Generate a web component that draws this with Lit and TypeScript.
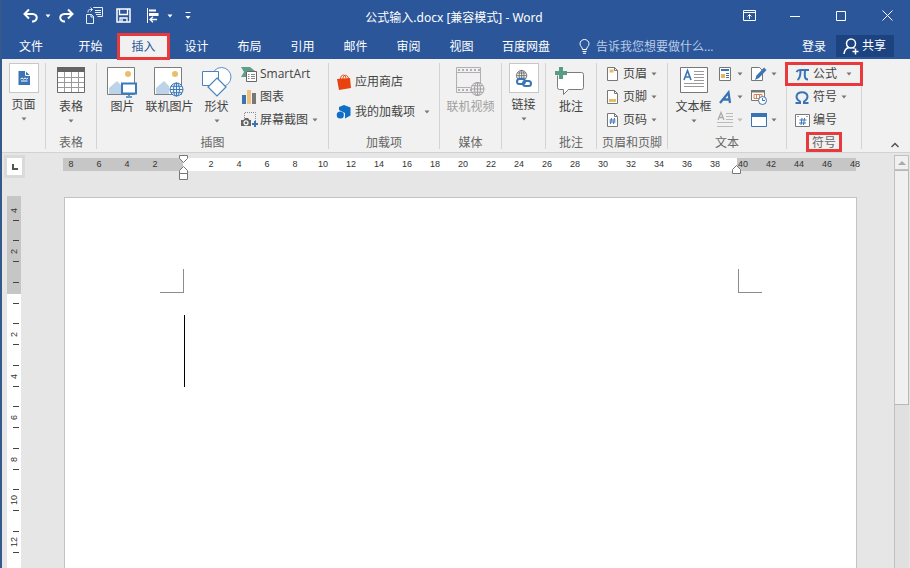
import { LitElement, html, css, svg } from "lit";
import { customElement } from "lit/decorators.js";

const ic = (w: number, h: number, body: unknown) =>
  html`<svg width=${w} height=${h} viewBox="0 0 ${w} ${h}" fill="none" aria-hidden="true">${body}</svg>`;

const caret = html`<svg class="caret" width="6" height="4" viewBox="0 0 6 4" aria-hidden="true"><path d="M.5.5h5L3 3.500z" fill="currentColor" /></svg>`;

const globe = svg`<circle cx="7" cy="7" r="6.5" fill="#f1f1f1" stroke="currentColor"/><ellipse cx="7" cy="7" rx="3" ry="6.5" stroke="currentColor"/><path d="M7 .5v13M.5 7h13M1.5 3.8h11M1.5 10.2h11" stroke="currentColor"/>`;

const photo = svg`<path d="M.5.5h27v27H.5z" fill="#fff" stroke="#7d7d7d"/><circle cx="21" cy="7" r="3" fill="#e8c067"/><path d="M2 27v-6l8-7 5 5v8z" fill="#bdd3ea"/>`;

const icons = {
  undo: ic(16, 14, svg`<path d="M2 5h7.5c6 0 5.500 8-.5 7.500" stroke="#fff" stroke-width="2"/><path d="M6 .5 1.500 5 6 9.500" stroke="#fff" stroke-width="2"/>`),
  redo: ic(16, 14, svg`<path d="M14 5H6.500C.5 5 1 13 7 12.500" stroke="#fff" stroke-width="2"/><path d="m10 .5 4.500 4.500L10 9.500" stroke="#fff" stroke-width="2"/>`),
  paste: ic(17, 17, svg`<path d="M7.500 1V.5h9v9h-5M9 3.500h6M9 5.500h6M10 7.500h5M.5 7.500h5l2 2v7h-7zM5 7.500v2.500h3M2 5.500c0-3 1-3 4-3M4.500.5l2 2-2 2" stroke="#e8eef8"/>`),
  save: ic(15, 15, svg`<path d="M1 1h13v13H1z" stroke="#fff" stroke-width="1.500"/><path d="M3.500 1v5.500h8V1M4 14v-4h7v4M6 11v3" stroke="#fff" stroke-width="1.300"/>`),
  align: ic(14, 15, svg`<path d="M1.500 0v15" stroke="#fff"/><path d="M3 1.500h7v2H3zM3 5h9.500v3H3z" fill="#fff"/><path d="M11 11.500H4M7 8.800l-3 2.700 3 2.700" stroke="#fff" stroke-width="1.300"/>`),
  more: ic(6, 8, svg`<path d="M.5.500h5" stroke="#fff"/><path d="M.5 4h5L3 7z" fill="#fff"/>`),
  ribbonOpts: ic(13, 11, svg`<path d="M.5.5h12v10H.5zM.5 2.500h12M6.500 9V4.500M4.500 6.500l2-2 2 2" stroke="#fff"/>`),
  min: ic(10, 10, svg`<path d="M0 5.500h10" stroke="#fff"/>`),
  max: ic(10, 10, svg`<path d="M.5.5h9v9h-9z" stroke="#fff"/>`),
  close: ic(11, 11, svg`<path d="m.5.5 10 10M10.500.5l-10 10" stroke="#fff"/>`),
  bulb: ic(11, 15, svg`<path d="M3.500 10.500C3.500 8 1 7.500 1 4.800a4.500 4.300 0 0 1 9 0c0 2.700-2.500 3.200-2.500 5.700zM3.500 12.500h4M4 14.300h3" stroke="#fff"/>`),
  share: ic(16, 17, svg`<circle cx="8" cy="5.500" r="4.500" stroke="#fff" stroke-width="1.500"/><path d="M1 16c.5-4 2.500-6 5-6.500M10 9.500l1.500.8M12.500 10.500v6M9.500 13.500h6" stroke="#fff" stroke-width="1.500"/>`),
  page: ic(12, 14, svg`<path d="M.5 0h7L12 4.500V14H.5z" fill="#3b74b4"/><path d="M7.500 0v4.500H12" stroke="#fff"/><path d="m2.500 8 1.500-1 1.500 1L7 7l1.500 1L10 7M3 10h6.500" stroke="#fff"/>`),
  table: ic(28, 26, svg`<path d="M.5.5h27v25H.5z" fill="#fff"/><path d="M7.500 5v20M14.500 5v20M21.500 5v20M1 10.500h26M1 15.500h26M1 20.500h26" stroke="#9a9a9a"/><path d="M.5.5h27v25H.5z" stroke="#6a6a6a"/><path d="M0 0h28v5H0z" fill="#646464"/>`),
  picture: ic(32, 32, svg`${photo}<path d="M15 16.500h14v10H15z" fill="#fff" stroke="#3b79bd" stroke-width="2"/><path d="M19 30h6M22 27v2" stroke="#3b79bd" stroke-width="1.500"/>`),
  webPicture: ic(32, 32, svg`${photo}<g transform="translate(15.500 15.500)" color="#3b79bd">${globe}</g>`),
  shapes: ic(30, 30, svg`<circle cx="19.500" cy="10" r="9.500" fill="#fff" stroke="#5b90c8"/><path d="M.5 4.500h16v14H.5z" fill="#fff" stroke="#4a82be"/><path d="m15 11 9 9-9 9-9-9z" fill="#fff" stroke="#4a82be" stroke-width="1.200"/>`),
  smartart: ic(16, 16, svg`<path d="M0 1h9l5 4h-9v6H0l3-5z" fill="#5f9f88"/><path d="M5.500 5.500h10v10h-10z" fill="#fff" stroke="#666"/><path d="M7 8.500h1.500M10 8.500h4M7 10.500h1.500M10 10.500h4M7 12.500h1.500M10 12.500h4" stroke="#888"/>`),
  chart: ic(16, 14, svg`<path d="M1 5h4v9H1z" fill="#3c74b2"/><path d="M6 0h4v14H6z" fill="#efc27c"/><path d="M11 3h4v11h-4z" fill="#777"/>`),
  screenshot: ic(17, 16, svg`<path d="M3.500 6V.5h11V9" stroke="#888" stroke-dasharray="1 1"/><path d="M0 8h2.500L4 6h3l1.500 2H10v6H0z" fill="#666"/><circle cx="5" cy="10.800" r="2" stroke="#fff" stroke-width="1.200"/><path d="M14 9v6M11 12h6" stroke="#3b74b4" stroke-width="2"/>`),
  store: ic(16, 16, svg`<path d="m1 5 13-1 1 10-12 2z" fill="#e8420f"/><path d="M4.500 5c0-5 5-5 5.500-1M7 5c0-5 5-5 5.500 0" stroke="#e8420f"/>`),
  addins: ic(16, 16, svg`<path d="m8 1 6.500 2.500v8L9 14.500V9L3 6V3z" fill="#0f6fc6"/><circle cx="4.300" cy="11" r="3.600" fill="#0f6fc6"/>`),
  video: ic(30, 30, svg`<path d="M.5.500h24v25H.5z" fill="#f3f0f3" stroke="#b0b0b0"/><path d="M.5 5.500h24M.5 20.500h14" stroke="#b0b0b0"/><path d="M2 3h22M2 23h13" stroke="#b0b0b0" stroke-width="2" stroke-dasharray="2 2"/><g transform="translate(14.500 15)" color="#a0a0a0">${globe}</g>`),
  link: ic(18, 17, svg`<g transform="translate(1 0) scale(.8)" color="#666">${globe}</g><rect x="2" y="9" width="8" height="5" rx="2.500" fill="#fff" stroke="#3b74b4" stroke-width="2"/><rect x="8" y="11" width="8" height="5" rx="2.500" stroke="#3b74b4" stroke-width="2"/>`),
  comment: ic(32, 30, svg`<path d="M4.500 5.500h22a2 2 0 0 1 2 2v13a2 2 0 0 1-2 2h-13l-5 5v-5h-4a2 2 0 0 1-2-2v-13a2 2 0 0 1 2-2z" fill="#fff" stroke="#7b7b7b"/><path d="M6 0v12M0 6h12" stroke="#f1f1f1" stroke-width="5"/><path d="M6 0v12M0 6h12" stroke="#5a9b83" stroke-width="4"/>`),
  header: ic(11, 14, svg`<path d="M.5.500h7l3 3v10H.5z" fill="#fff" stroke="#777"/><path d="M7.500.5v3h3" stroke="#777"/><path d="M2.500 4h4" stroke="#e6bd62" stroke-width="3"/>`),
  footer: ic(11, 14, svg`<path d="M.5.500h7l3 3v10H.5z" fill="#fff" stroke="#777"/><path d="M7.500.5v3h3" stroke="#777"/><path d="M2 10.500h7" stroke="#e6bd62" stroke-width="3"/>`),
  pageNo: ic(11, 14, svg`<path d="M.5.500h7l3 3v10H.5z" fill="#fff" stroke="#777"/><path d="M7.500.5v3h3" stroke="#777"/><path d="M4.500 5l-1 6M7.500 5l-1 6M2.500 7h6M2.500 9h6" stroke="#3b74b4"/>`),
  textbox: ic(28, 26, svg`<path d="M.5.500h27v25H.5z" fill="#fff" stroke="#777"/><path d="m4 13 3.500-9.500L11 13M5.500 10h4" stroke="#3b74b4" stroke-width="1.600"/><path d="M14 4.500h10M14 7.500h10M14 10.500h10M14 13.500h10M4 16.500h20M4 19.500h20" stroke="#999"/>`),
  parts: ic(12, 14, svg`<path d="M.5.500h11v13H.5z" fill="#fff" stroke="#777"/><path d="M2 3h8" stroke="#3b74b4" stroke-width="2"/><path d="M2 7h4v4H2z" fill="#e6b45a"/><path d="M7 6.500h3M7 8.500h3M7 10.500h3" stroke="#3b74b4"/>`),
  signature: ic(16, 16, svg`<path d="M.5 1.500h8l3 3v10H.5z" fill="#fff" stroke="#777"/><path d="M4 14l1.500-4.500 7.500-8 2.500 2.500-7.500 8z" fill="#3b74b4"/>`),
  wordart: ic(13, 13, svg`<path d="M1 12 9.500 1.500 11 12M4 8.500h6" stroke="#3b74b4" stroke-width="2.300"/>`),
  date: ic(16, 16, svg`<path d="M.5 1.500h13v10H.5z" fill="#fff" stroke="#777"/><path d="M0 1h14v2.500H0z" fill="#777"/><path d="M3 5.500h8v4H3zM5.500 5v5M8.500 5v5" stroke="#dd8050"/><circle cx="11.500" cy="11.500" r="4" fill="#fff" stroke="#3b74b4"/><path d="M11.500 9v2.500H14" stroke="#3b74b4"/>`),
  dropcap: ic(16, 16, svg`<path d="m1 8 3-7.500L7 8M2.500 5.500h3" stroke="#aaa" stroke-width="1.300"/><path d="M9 1.500h7M9 4.500h7M9 7.500h7M0 10.500h16M0 14.500h16" stroke="#bbb"/>`),
  object: ic(16, 14, svg`<path d="M.5.500h15v13H.5z" fill="#fff" stroke="#3b74b4"/><path d="M0 0h16v4H0z" fill="#3b74b4"/>`),
  pi: ic(13, 13, svg`<path d="M.5 4C1.500 2 2 2 4 2h9" stroke="#3b74b4" stroke-width="2"/><path d="M4.500 2.500c0 5-.5 8-3 9.500M9 2.500c-.5 6-.5 9 3 9" stroke="#3b74b4" stroke-width="2"/>`),
  omega: ic(14, 13, svg`<path d="M.5 12h4.500v-1.500C-1 7 1.500 1.200 7 1.200S15 7 9 10.500V12h4.500" stroke="#3b74b4" stroke-width="2"/>`),
  number: ic(15, 13, svg`<path d="M.5.500h14v12H.5z" fill="#fff" stroke="#777"/><path d="M2 2.500h2M11 2.500h2" stroke="#aaa"/><path d="M7 4l-1 7M9.500 4l-1 7M4.500 6h7M4 9h7" stroke="#3b74b4"/>`),
};

const big = (icon: unknown, label: string, arrow = false, cls = "") => html`
  <button class="big ${cls}"><span class="pic">${icon}</span><span class="text">${label}</span>${arrow ? caret : ""}</button>`;

const row = (icon: unknown, label: string, arrow = false, cls = "") => html`
  <button class="row ${cls}" aria-label=${label}><span class="pic">${icon}</span><span class="text">${label}</span>${arrow ? caret : ""}</button>`;

const mini = (icon: unknown, name: string, arrow = true, cls = "") => html`
  <button class="row mini ${cls}" aria-label=${name}><span class="pic">${icon}</span>${arrow ? caret : ""}</button>`;

const base = css`
  :host { font: 12px/16px "Open Sans", "Noto Sans CJK SC", sans-serif; }
  * { box-sizing: border-box; }
  button { font: inherit; color: inherit; background: none; border: 0; padding: 0; margin: 0; white-space: nowrap; }
  svg { display: block; flex: none; overflow: visible; }
`;

@customElement("word-titlebar")
class WordTitlebar extends LitElement {
  static styles = [base, css`
    :host { display: block; background: #2b579a; color: #fff; }
    .top { display: grid; grid-template-columns: 1fr auto 1fr; height: 33px; }
    .quick, .window { display: flex; height: 31px; }
    .quick { padding-left: 14px; }
    .quick button { display: grid; place-items: center; width: 29px; }
    .quick .drop { width: 6px; }
    .quick .more { width: 6px; margin-left: 12px; }
    .window { justify-content: flex-end; }
    .window button { display: grid; place-items: center; width: 46px; }
    .title { margin: 0; padding: 2px 4px 0 0; font: 400 12px/31px "Noto Sans", "Noto Sans CJK SC", sans-serif; white-space: nowrap; }
    .tabs { display: flex; height: 26px; }
    .tab { padding: 1px 14px 0; min-width: 53px; }
    .file { width: 58px; margin-right: 4px; }
    .active { background: #f1f1f1; color: #2b579a; position: relative; }
    .active::after { content: ""; position: absolute; inset: 0 0 -1px; border: 3px solid #e63a3c; z-index: 2; }
    .ask { flex: 1; display: flex; align-items: center; gap: 6px; padding: 1px 0 0 15px; min-width: 0; }
    .ask input { font: inherit; flex: 1; min-width: 0; border: 0; padding: 0; outline: 0; background: none; color: #fff; }
    .ask input::placeholder { color: #b9cbe6; opacity: 1; }
    .login { padding: 1px 10px 0; }
    .share { display: flex; align-items: center; gap: 3px; margin: 2px 16px 2px 0; padding: 0 8px 0 7px; background: #1c4380; }
  `];
  render() {
    const tabs = ["开始", "插入", "设计", "布局", "引用", "邮件", "审阅", "视图", "百度网盘"];
    return html`
      <div class="top">
        <div class="quick">
          <button aria-label="撤消">${icons.undo}</button><button class="drop" aria-label="撤消列表">${caret}</button>
          <button aria-label="恢复">${icons.redo}</button>
          <button aria-label="粘贴">${icons.paste}</button>
          <button aria-label="保存">${icons.save}</button>
          <button aria-label="对齐">${icons.align}</button><button class="drop" aria-label="对齐列表">${caret}</button>
          <button class="more" aria-label="自定义快速访问工具栏">${icons.more}</button>
        </div>
        <h1 class="title">公式输入.docx [兼容模式] - Word</h1>
        <div class="window">
          <button aria-label="功能区显示选项">${icons.ribbonOpts}</button>
          <button aria-label="最小化">${icons.min}</button>
          <button aria-label="最大化">${icons.max}</button>
          <button aria-label="关闭">${icons.close}</button>
        </div>
      </div>
      <nav class="tabs">
        <button class="tab file">文件</button>
        ${tabs.map((t) => html`<button class="tab ${t === "插入" ? "active" : ""}">${t}</button>`)}
        <label class="ask">${icons.bulb}<input aria-label="告诉我您想要做什么" placeholder="告诉我您想要做什么..." /></label>
        <button class="login">登录</button>
        <button class="share">${icons.share}<span>共享</span></button>
      </nav>`;
  }
}

@customElement("word-ribbon")
class WordRibbon extends LitElement {
  static styles = [base, css`
    :host { display: grid; grid-template-columns: 44px 51px 232px 111px 62px 44px 51px 71px 119px 75px 1fr;
      padding: 4px 0 3px; background: #f1f1f1; border-bottom: 1px solid #d2d2d2; color: #444; }
    .group { display: flex; flex-direction: column; border-right: 1px solid #d4d4d4; min-width: 0; }
    .body { display: flex; height: 71px; justify-content: center; }
    .name { height: 15px; line-height: 17px; text-align: center; color: #666; white-space: nowrap; }
    .caret { color: #777; }
    .big { display: flex; flex-direction: column; align-items: center; width: 47px; padding-top: 3px; }
    .big .pic { height: 32px; display: grid; place-items: start center; padding-top: 1px; }
    .big .text { line-height: 18px; }
    .big .caret { margin-top: 3px; }
    .boxed { padding-top: 0; }
    .boxed .pic { width: 30px; height: 30px; margin-bottom: 3px; padding: 0; place-items: center; background: #fff; border: 1px solid #c8c8c8; }
    .off { color: #a0a0a0; }
    .off .caret { color: #bbb; }
    .illus { justify-content: flex-start; padding-left: 2px; }
    .illus .rows { padding-left: 1px; }
    .rows { display: flex; flex-direction: column; }
    .row { display: flex; align-items: center; height: 23px; gap: 3px; padding-bottom: 1px; }
    .row .pic { width: 16px; display: grid; place-items: center; }
    .row .caret { margin-left: 1px; }
    .addins { flex: 1; padding: 4px 0 0 7px; }
    .addins .row { height: 30px; }
    .wide .caret { margin-left: 6px; }
    .hf { flex: 1; padding-left: 7px; }
    .text-group { justify-content: flex-start; padding-left: 2px; }
    .minis { display: grid; grid-template-columns: 34px 34px; grid-auto-rows: 23px; }
    .symbols { flex: 1; }
    .symbols .row { padding-left: 7px; }
    .marked { position: relative; }
    .symbols .marked::after { content: ""; position: absolute; inset: -1px -2px 0; border: 3px solid #e63a3c; }
    .name .marked::after { content: ""; position: absolute; inset: -2px -6px -1px; border: 3px solid #e63a3c; }
    .collapse { align-self: end; justify-self: end; padding: 0 11px 1px 0; }
  `];
  render() {
    const group = (name: unknown, body: unknown, cls = "") =>
      html`<section class="group"><div class="body ${cls}">${body}</div><div class="name">${name}</div></section>`;
    return html`
      ${group("", big(icons.page, "页面", true, "boxed"))}
      ${group("表格", big(icons.table, "表格", true))}
      ${group("插图", html`
        ${big(icons.picture, "图片")}${big(icons.webPicture, "联机图片")}${big(icons.shapes, "形状", true)}
        <div class="rows">${row(icons.smartart, "SmartArt")}${row(icons.chart, "图表")}${row(icons.screenshot, "屏幕截图", true)}</div>`, "illus")}
      ${group("加载项", html`<div class="rows addins">${row(icons.store, "应用商店")}${row(icons.addins, "我的加载项", true, "wide")}</div>`)}
      ${group("媒体", big(icons.video, "联机视频", false, "off"))}
      ${group("", big(icons.link, "链接", true, "boxed"))}
      ${group("批注", big(icons.comment, "批注"))}
      ${group("页眉和页脚", html`<div class="rows hf">${row(icons.header, "页眉", true)}${row(icons.footer, "页脚", true)}${row(icons.pageNo, "页码", true)}</div>`)}
      ${group("文本", html`${big(icons.textbox, "文本框", true)}
        <div class="minis">
          ${mini(icons.parts, "文档部件")}${mini(icons.signature, "签名行")}
          ${mini(icons.wordart, "艺术字")}${mini(icons.date, "日期和时间", false)}
          ${mini(icons.dropcap, "首字下沉", true, "off")}${mini(icons.object, "对象")}
        </div>`, "text-group")}
      ${group(html`<span class="marked">符号</span>`, html`<div class="rows symbols">
          ${row(icons.pi, "公式", true, "marked wide")}${row(icons.omega, "符号", true)}${row(icons.number, "编号")}</div>`)}
      <button class="collapse" aria-label="折叠功能区">${ic(8, 6, svg`<path d="m.5 5 3.500-3.500L7.500 5" stroke="#555" stroke-width="1.500"/>`)}</button>`;
  }
}

@customElement("word-editor")
class WordEditor extends LitElement {
  static styles = [base, css`
    :host { display: grid; grid-template-columns: 26px 1fr 17px; background: #e6e6e6; min-height: 0; overflow: hidden; color: #444; }
    .side { display: flex; flex-direction: column; padding-left: 5px; min-height: 0; }
    .stop { display: grid; place-items: center; flex: none; width: 21px; height: 23px; margin: 2px 0 18px -3px; background: #fff; border: 3px solid #dadada; }
    .vruler { flex: 1; list-style: none; margin: 0; padding: 0; width: 14px; overflow: hidden;
      background: linear-gradient(#c6c6c6 98px, #fff 98px); color: #333; font: 9px/14px "Liberation Sans", sans-serif; }
    .vruler li { height: 42px; display: flex; flex-direction: column; align-items: center; justify-content: center; }
    .vruler li:nth-child(odd) { height: 41px; }
    .vruler li:first-child { margin-top: -7px; }
    .vruler li::before, .vruler li::after { content: ""; width: 6px; height: 1px; margin-left: 4px; background: #444; }
    .vruler li:first-child::before { background: none; }
    .vruler span { height: 20px; writing-mode: vertical-rl; transform: rotate(180deg); text-align: center; }
    .desk { display: flex; flex-direction: column; align-items: center; min-width: 0; }
    .column { flex: 1; display: flex; flex-direction: column; width: 793px; }
    .hruler { position: relative; list-style: none; display: flex; margin: 5px -14px 26px -7px; padding: 0; height: 13px;
      background: linear-gradient(90deg, transparent 6px, #c6c6c6 6px 126px, #fff 126px 680px, #c6c6c6 680px 799px, transparent 799px);
      color: #333; font: 9px/13px "Liberation Sans", sans-serif; }
    .hruler li { flex: none; width: 28px; text-align: center; }
    .hruler .indent { position: absolute; top: -3px; left: 122px; width: 9px; }
    .hruler .right { position: absolute; top: 7px; left: 675px; width: 9px; }
    .paper { flex: 1; background: #fff; border: 1px solid #c3c3c3; border-bottom: 0; }
    .corners { display: flex; justify-content: space-between; padding: 71px 94px 0 95px; }
    .corner { width: 24px; height: 24px; border: 0 solid #8c8c8c; border-bottom-width: 1px; }
    .tl { border-right-width: 1px; }
    .tr { border-left-width: 1px; }
    .cursor { width: 1px; height: 72px; margin: 22px 0 0 119px; background: #000; }
    .scroll { display: flex; flex-direction: column; margin: 2px 1px 0 1px; border-left: 1px solid #c0c0c0; background: #e0e0e0; }
    .up { display: grid; place-items: center; height: 15px; background: #f0f0f0; border: 1px solid #c0c0c0; border-left: 0; }
    .thumb { height: 57%; background: #f0f0f0; border: 1px solid #b8b8b8; border-left: 0; }
  `];
  render() {
    const h = ["8", "6", "4", "2", "", ...Array.from({ length: 24 }, (_, i) => String(i * 2 + 2))];
    const v = ["4", "2", "", "2", "4", "6", "8", "10", "12"];
    return html`
      <div class="side">
        <button class="stop" aria-label="制表符">${ic(6, 6, svg`<path d="M1 0v5h5" stroke="#555" stroke-width="2"/>`)}</button>
        <ol class="vruler">${v.map((n) => html`<li><span>${n}</span></li>`)}</ol>
      </div>
      <main class="desk"><div class="column">
        <ol class="hruler">
          ${h.map((n) => html`<li>${n}</li>`)}
          <li class="indent">${ic(9, 26, svg`<path d="M.5.500h8v3l-4 4-4-4zM.5 18.500v-3l4-4 4 4v3zM.5 18.500h8v6h-8z" fill="#fff" stroke="#777"/>`)}</li>
          <li class="right">${ic(9, 9, svg`<path d="M.5 8.500v-4l4-4 4 4v4z" fill="#fff" stroke="#777"/>`)}</li>
        </ol>
        <article class="paper">
          <div class="corners"><div class="corner tl"></div><div class="corner tr"></div></div>
          <div class="cursor"></div>
        </article>
      </div></main>
      <div class="scroll">
        <button class="up" aria-label="向上滚动">${ic(8, 4, svg`<path d="M0 4h8L4 0z" fill="#aaa"/>`)}</button>
        <div class="thumb"></div>
      </div>`;
  }
}

@customElement("app-root")
class AppRoot extends LitElement {
  static styles = css`
    :host { display: flex; flex-direction: column; height: 100vh; box-sizing: border-box; border-left: 2px solid #34598c; overflow: hidden; }
    word-editor { flex: 1; }
  `;
  render() {
    return html`<word-titlebar></word-titlebar><word-ribbon></word-ribbon><word-editor></word-editor>`;
  }
}
